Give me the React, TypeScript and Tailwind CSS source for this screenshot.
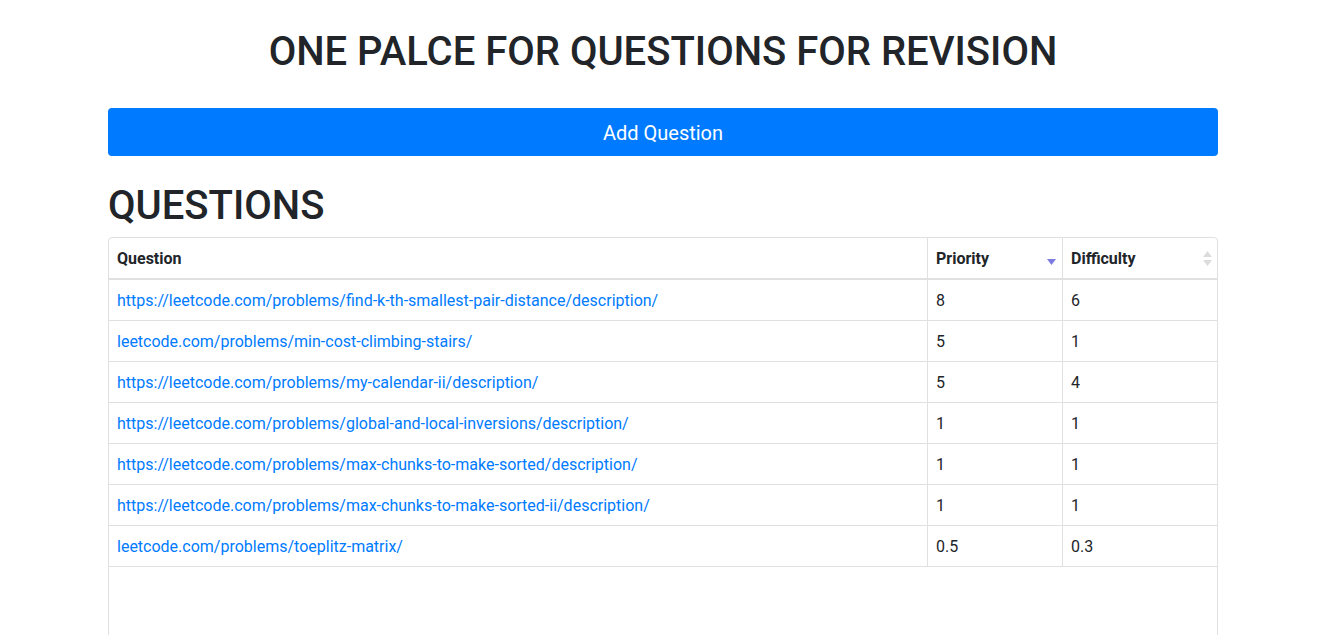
import React from "react";

const rows = [
  { q: "https://leetcode.com/problems/find-k-th-smallest-pair-distance/description/", p: "8", d: "6" },
  { q: "leetcode.com/problems/min-cost-climbing-stairs/", p: "5", d: "1" },
  { q: "https://leetcode.com/problems/my-calendar-ii/description/", p: "5", d: "4" },
  { q: "https://leetcode.com/problems/global-and-local-inversions/description/", p: "1", d: "1" },
  { q: "https://leetcode.com/problems/max-chunks-to-make-sorted/description/", p: "1", d: "1" },
  { q: "https://leetcode.com/problems/max-chunks-to-make-sorted-ii/description/", p: "1", d: "1" },
  { q: "leetcode.com/problems/toeplitz-matrix/", p: "0.5", d: "0.3" },
];

export default function App() {
  return (
    <div className="min-h-screen bg-white text-[#212529] font-['Roboto',sans-serif]">
      <div className="w-[1110px] mx-auto pt-[28px]">
        <h1 className="text-center text-[40px] leading-[48px] font-medium">ONE PALCE FOR QUESTIONS FOR REVISION</h1>
        <button className="mt-[32px] w-full h-[48px] pt-[2px] rounded-[4px] bg-[#007bff] text-white text-[20px]">Add Question</button>
        <h1 className="mt-[26px] text-[40px] leading-[48px] font-medium">QUESTIONS</h1>
        <div className="mt-[7px] h-[420px] border border-[#e0e0e0] rounded-[4px] overflow-hidden">
          <div className="flex h-[42px] border-b-2 border-[#e0e0e0] font-bold text-[16px]">
            <div className="w-[819px] border-r border-[#e0e0e0] pl-[8px] pt-[2px] flex items-center">Question</div>
            <div className="w-[135px] border-r border-[#e0e0e0] pl-[8px] pr-[6px] pt-[2px] flex items-center justify-between">
              <span>Priority</span>
              <svg width="9" height="8" viewBox="0 0 9 8" className="mt-[6px]"><path d="M0 1 L9 1 L4.5 7 Z" fill="#7b7be0" /></svg>
            </div>
            <div className="flex-1 pl-[8px] pr-[5px] pt-[2px] flex items-center justify-between">
              <span>Difficulty</span>
              <svg width="9" height="15" viewBox="0 0 9 15" className="-mt-[2px]"><path d="M4.5 0 L9 6 L0 6 Z M0 9 L9 9 L4.5 15 Z" fill="#dcdcdc" /></svg>
            </div>
          </div>
          {rows.map((r, i) => (
            <div key={i} className="flex h-[41px] border-b border-[#e0e0e0] text-[16px]">
              <div className="w-[819px] border-r border-[#e0e0e0] pl-[8px] pt-[2px] flex items-center">
                <a href="#" className="text-[#007bff]">{r.q}</a>
              </div>
              <div className="w-[135px] border-r border-[#e0e0e0] pl-[8px] pt-[2px] flex items-center">{r.p}</div>
              <div className="flex-1 pl-[8px] pt-[2px] flex items-center">{r.d}</div>
            </div>
          ))}
        </div>
      </div>
    </div>
  );
}
